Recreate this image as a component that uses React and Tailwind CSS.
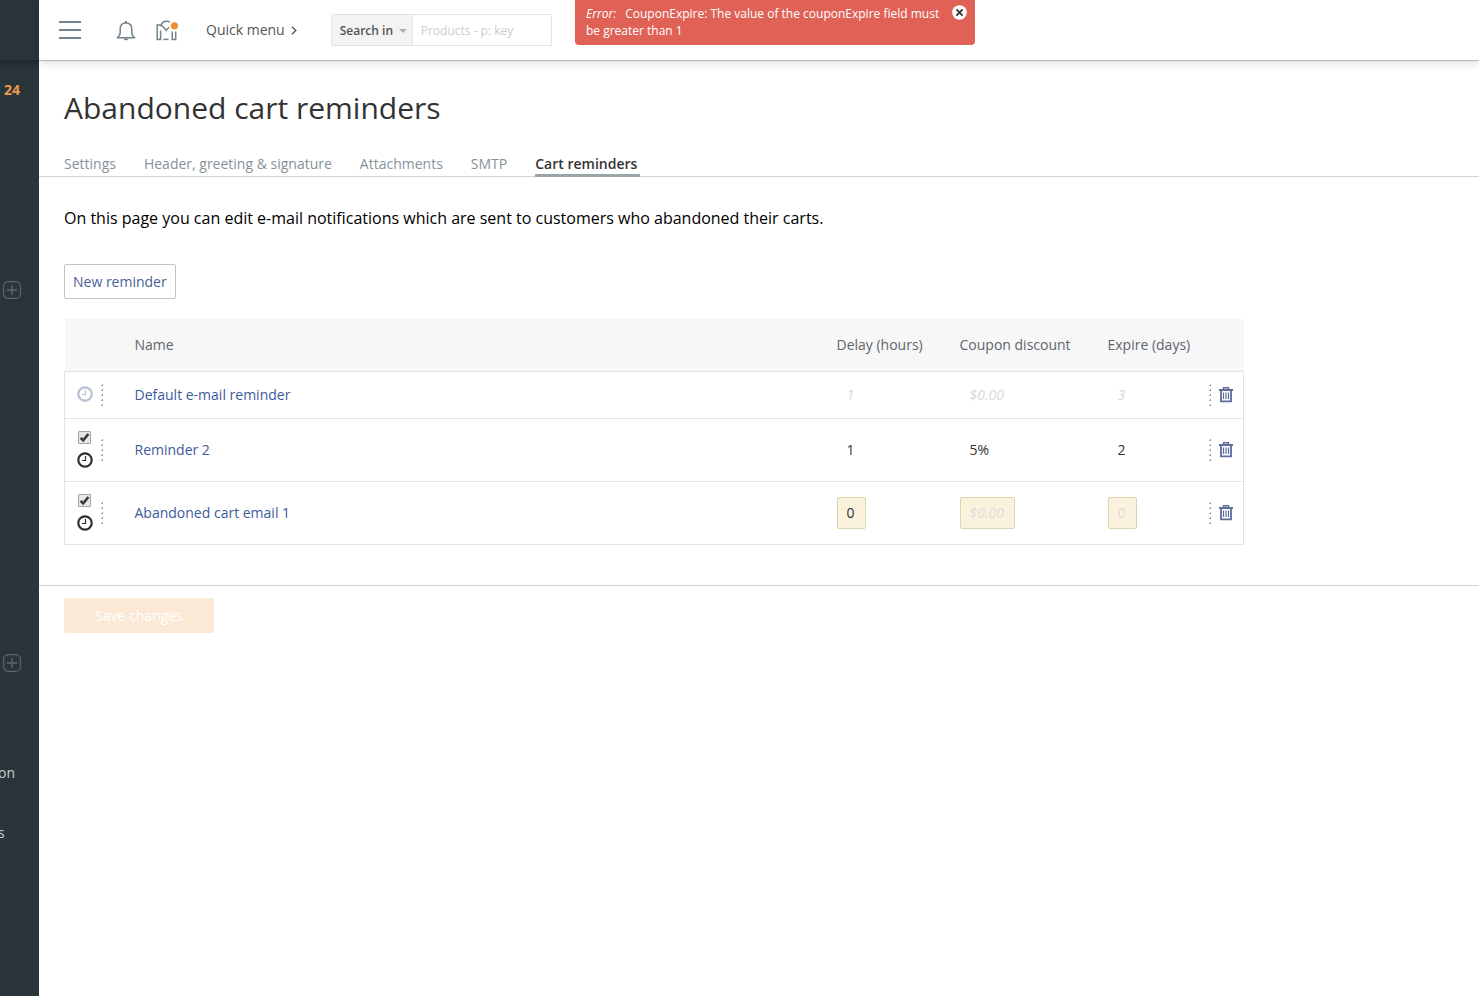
import React, { useState } from 'react';

const TABS = ['Settings', 'Header, greeting & signature', 'Attachments', 'SMTP', 'Cart reminders'];

const REMINDERS = [
  { id: 1, name: 'Default e-mail reminder', delay: '1', discount: '$0.00', expire: '3', isDefault: true },
  { id: 2, name: 'Reminder 2', delay: '1', discount: '5%', expire: '2' },
  { id: 3, name: 'Abandoned cart email 1', delay: '0', discount: '', expire: '', editing: true },
];

function BellIcon() {
  return (
    <svg width="20" height="21" viewBox="0 0 20 21" fill="none" stroke="#73838c" strokeWidth="1.5">
      <path d="M1.2 17.8h17.6c-2-1.4-3-3-3-5.2V9c0-3.6-2.2-6-5.8-6S4.2 5.4 4.2 9v3.6c0 2.2-1 3.8-3 5.2z" strokeLinejoin="round" />
      <path d="M10 1v2" strokeWidth="2" />
      <path d="M7.4 18.4c.5 1.2 1.4 1.8 2.6 1.8s2.1-.6 2.6-1.8z" fill="#73838c" stroke="none" />
    </svg>
  );
}

function MarketIcon() {
  return (
    <svg width="24" height="21" viewBox="0 0 24 21" fill="none" stroke="#73838c" strokeWidth="1.5">
      <path d="M4.6 10.5v9H1.2V5h3.4" />
      <path d="M4.6 6.2C5.4 3 7.8 1.3 10.4 1.3c1.3 0 2.6.3 3.4.8" />
      <path d="M4.6 5.4c1.1 0 2 .5 2.8 1.6l2.8 3.4 2.7-3.2" />
      <path d="M7.4 19.4h5.2" />
      <path d="M16.2 11.5v8h3.5v-8" />
      <circle cx="18.4" cy="5.8" r="3.6" fill="#e98f2e" stroke="none" />
    </svg>
  );
}

function ClockIcon({ color }) {
  return (
    <svg width="16" height="16" viewBox="0 0 16 16" fill="none" stroke={color}>
      <circle cx="8" cy="8" r="6.7" strokeWidth="2.2" />
      <path d="M8.5 4v4.5H5" strokeWidth="1.2" />
    </svg>
  );
}

function TrashIcon() {
  return (
    <svg width="14" height="16" viewBox="0 0 14 16" fill="none" stroke="#5f6c9c">
      <path d="M0 3h14" strokeWidth="2" />
      <path d="M4.5 2.5V.7h5v1.8" strokeWidth="1.4" />
      <path d="M2 3.5v10.9h10V3.5" strokeWidth="1.8" />
      <path d="M4.5 5.5v6.5M7 5.5v6.5M9.5 5.5v6.5" strokeWidth="1.2" />
    </svg>
  );
}

function Handle() {
  return (
    <svg width="2" height="22" viewBox="0 0 2 22" fill="#a3a3a3">
      <path d="M0 1h2v1H0zM0 6h2v1H0zM0 11h2v1H0zM0 16h2v1H0zM0 21h2v1H0zM1 0h1v1H1zM1 5h1v1H1zM1 10h1v1H1zM1 15h1v1H1zM1 20h1v1H1z" />
    </svg>
  );
}

function PlusButton({ label }) {
  return (
    <button type="button" aria-label={label} className="ml-[3px] block size-[18px]">
      <svg width="18" height="18" viewBox="0 0 18 18" fill="none" stroke="#5d676d">
        <rect x=".6" y=".6" width="16.8" height="16.8" rx="4.5" strokeWidth="1.1" />
        <path d="M9 4v10M4 9h10" strokeWidth="1.4" />
      </svg>
    </button>
  );
}

function Sidebar() {
  return (
    <aside className="w-[39px] shrink-0 overflow-hidden bg-[#2a353b] text-[14px] leading-5 text-[#c9ced1]">
      <div className="h-[61px] border-b border-[#20282d]" />
      <div className="h-2 bg-linear-to-b from-[#20292e] to-[#2a353b]" />
      <nav>
        <a href="#orders" className="ml-1 mt-[11px] block font-bold text-[#ef9a4b]">24</a>
        <div className="mt-[181px]"><PlusButton label="Add product" /></div>
        <div className="mt-[355px]"><PlusButton label="Add page" /></div>
        <a href="#promotion" className="-ml-[2px] mt-[91px] block">on</a>
        <a href="#settings" className="-ml-[2px] mt-10 block">s</a>
      </nav>
    </aside>
  );
}

function TopBar() {
  return (
    <header className="relative flex h-[61px] items-center border-b border-[#b9b9b9] bg-white pl-5 shadow-[0_2px_8px_rgba(0,0,0,0.14)]">
      <button type="button" aria-label="Menu" className="flex w-[22px] flex-col gap-[6px]">
        <span className="h-[2px] bg-[#73838c]" />
        <span className="h-[2px] bg-[#73838c]" />
        <span className="h-[2px] bg-[#73838c]" />
      </button>
      <button type="button" aria-label="Notifications" className="ml-[35px] pt-px"><BellIcon /></button>
      <button type="button" aria-label="Marketplace" className="ml-5 pt-px"><MarketIcon /></button>
      <button type="button" className="ml-[26px] flex items-center gap-[6px] text-[14px] leading-5 text-[#555]">
        Quick menu
        <svg width="6" height="9" viewBox="0 0 6 9" fill="none" stroke="#555" strokeWidth="1.4"><path d="M1 .8l3.8 3.7L1 8.2" /></svg>
      </button>
      <form className="ml-[34px] flex h-8 w-[221px] rounded-[2px] border border-[#e3e3e3]" onSubmit={(e) => e.preventDefault()}>
        <button type="button" className="flex w-[81px] shrink-0 items-center gap-[6px] border-r border-[#e3e3e3] bg-[#f3f3f3] pl-2 pt-[2px] text-[12px] font-semibold text-[#555]">
          Search in
          <svg width="8" height="4" viewBox="0 0 8 4" fill="#b0b0b0"><path d="M0 0h8L4 4z" /></svg>
        </button>
        <input type="text" aria-label="Search" placeholder="Products - p: key" className="min-w-0 flex-1 px-2 pt-[2px] text-[12px] outline-none placeholder:text-[#ccc]" />
      </form>
    </header>
  );
}

function ErrorMessage({ onClose }) {
  return (
    <div role="alert" className="absolute left-[575px] top-0 z-10 flex w-[400px] items-start rounded-b-[4px] bg-[#e06257] pb-[6px] pl-[11px] pr-2 pt-[5px] text-[12px] leading-[17px] text-white">
      <p className="flex-1">
        <em className="mr-[9px] inline-block">Error:</em>
        <span>CouponExpire: The value of the couponExpire field must be greater than 1</span>
      </p>
      <button type="button" aria-label="Close" onClick={onClose} className="size-[15px]">
        <svg width="15" height="15" viewBox="0 0 15 15">
          <circle cx="7.5" cy="7.5" r="7.3" fill="#fff" />
          <path d="M4.4 4.4l6.2 6.2M10.6 4.4l-6.2 6.2" stroke="#333" strokeWidth="1.8" />
        </svg>
      </button>
    </div>
  );
}

function EnabledBox({ name }) {
  const [checked, setChecked] = useState(true);
  return (
    <label className="relative block size-[13px]">
      <input
        type="checkbox"
        aria-label={`Enable ${name}`}
        checked={checked}
        onChange={() => setChecked(!checked)}
        className="block size-[13px] appearance-none rounded-[1px] border border-[#a5a5a5] bg-[#e6e6e6]"
      />
      {checked && (
        <svg className="pointer-events-none absolute inset-0" width="13" height="13" viewBox="0 0 13 13" fill="none">
          <path d="M2.6 6.8l2.6 2.6 5.2-6.4" stroke="#3a3a3a" strokeWidth="2.6" />
        </svg>
      )}
    </label>
  );
}

function Cell({ row, value, placeholder, label, wide }) {
  if (row.editing) {
    return (
      <input
        type="text"
        aria-label={`${label}, ${row.name}`}
        defaultValue={value}
        placeholder={placeholder}
        className={`${wide ? 'w-[55px]' : 'w-[29px]'} block h-8 rounded-[2px] border border-[#ddd6b4] bg-[#faf2dc] px-[9px] text-[#333] outline-none placeholder:italic placeholder:text-[#ddd]`}
      />
    );
  }
  return <span className={`block pl-[10px] ${row.isDefault ? 'italic text-[#d8d8d8]' : 'text-[#333]'}`}>{value}</span>;
}

function RemindersTable() {
  return (
    <table className="mt-5 w-full max-w-[1180px] table-fixed border-collapse text-[14px] leading-5">
      <colgroup>
        <col className="w-[70px]" />
        <col />
        <col className="w-[123px]" />
        <col className="w-[148px]" />
        <col className="w-[101px]" />
        <col className="w-[35px]" />
      </colgroup>
      <thead className="bg-[#f7f7f7] text-left text-[#60656f]">
        <tr className="h-[52px]">
          <th />
          <th className="font-normal">Name</th>
          <th className="font-normal">Delay (hours)</th>
          <th className="font-normal">Coupon discount</th>
          <th className="font-normal">Expire (days)</th>
          <th />
        </tr>
      </thead>
      <tbody className="border border-[#e4e4e4]">
        {REMINDERS.map((row) => (
          <tr key={row.id} className={`${row.isDefault ? 'h-[47px]' : 'h-[63px]'} border-t border-[#e4e4e4]`}>
            <td>
              <div className="flex items-center gap-2 pl-3">
                <div className={`flex w-4 flex-col gap-2 ${row.isDefault ? 'pb-[2px]' : ''}`}>
                  {!row.isDefault && <div className="pl-px"><EnabledBox name={row.name} /></div>}
                  <ClockIcon color={row.isDefault ? '#b9bfd6' : '#2f2f2f'} />
                </div>
                <Handle />
              </div>
            </td>
            <td><a href={`#reminder-${row.id}`} className="text-[#3d5a9b]">{row.name}</a></td>
            <td><Cell row={row} value={row.delay} placeholder="0" label="Delay" /></td>
            <td><Cell row={row} value={row.discount} placeholder="$0.00" label="Coupon discount" wide /></td>
            <td><Cell row={row} value={row.expire} placeholder="0" label="Expire" /></td>
            <td>
              <div className="flex items-center gap-2">
                <Handle />
                <button type="button" aria-label={`Remove ${row.name}`}><TrashIcon /></button>
              </div>
            </td>
          </tr>
        ))}
      </tbody>
    </table>
  );
}

export default function App() {
  const [showError, setShowError] = useState(true);

  return (
    <div className="relative flex min-h-screen bg-white font-['Open_Sans',sans-serif] text-[#333]">
      <Sidebar />
      <div className="min-w-0 flex-1">
        <TopBar />
        <main>
          <h1 className="px-[25px] pt-[26px] text-[30px] leading-[42px]">Abandoned cart reminders</h1>
          <nav className="mt-6 flex h-6 gap-[25px] border-b border-[#d0d3d5] px-[25px] text-[14px] leading-[22px] text-[#86939a]">
            {TABS.map((tab) => (
              <a
                key={tab}
                href={`#${tab.toLowerCase().replace(/\W+/g, '-')}`}
                className={tab === 'Cart reminders' ? 'h-6 border-b-3 border-[#9aa5aa] pr-[3px] font-semibold text-[#333]' : 'pr-[3px]'}
              >
                {tab}
              </a>
            ))}
          </nav>
          <div className="px-[25px] pb-10 pt-[29px]">
            <p className="text-[16px] leading-6 text-black">
              On this page you can edit e-mail notifications which are sent to customers who abandoned their carts.
            </p>
            <button type="button" className="mt-[34px] block h-[35px] rounded-[2px] border border-[#c4c4c4] px-2 text-[14px] text-[#4c5f96]">
              New reminder
            </button>
            <RemindersTable />
          </div>
          <div className="border-t border-[#d0d3d5] px-[25px] py-3">
            <button type="button" disabled className="block h-[35px] w-[150px] rounded-[2px] bg-[#fbe9d5] text-[14px] font-medium text-white">
              Save changes
            </button>
          </div>
        </main>
      </div>
      {showError && <ErrorMessage onClose={() => setShowError(false)} />}
    </div>
  );
}
